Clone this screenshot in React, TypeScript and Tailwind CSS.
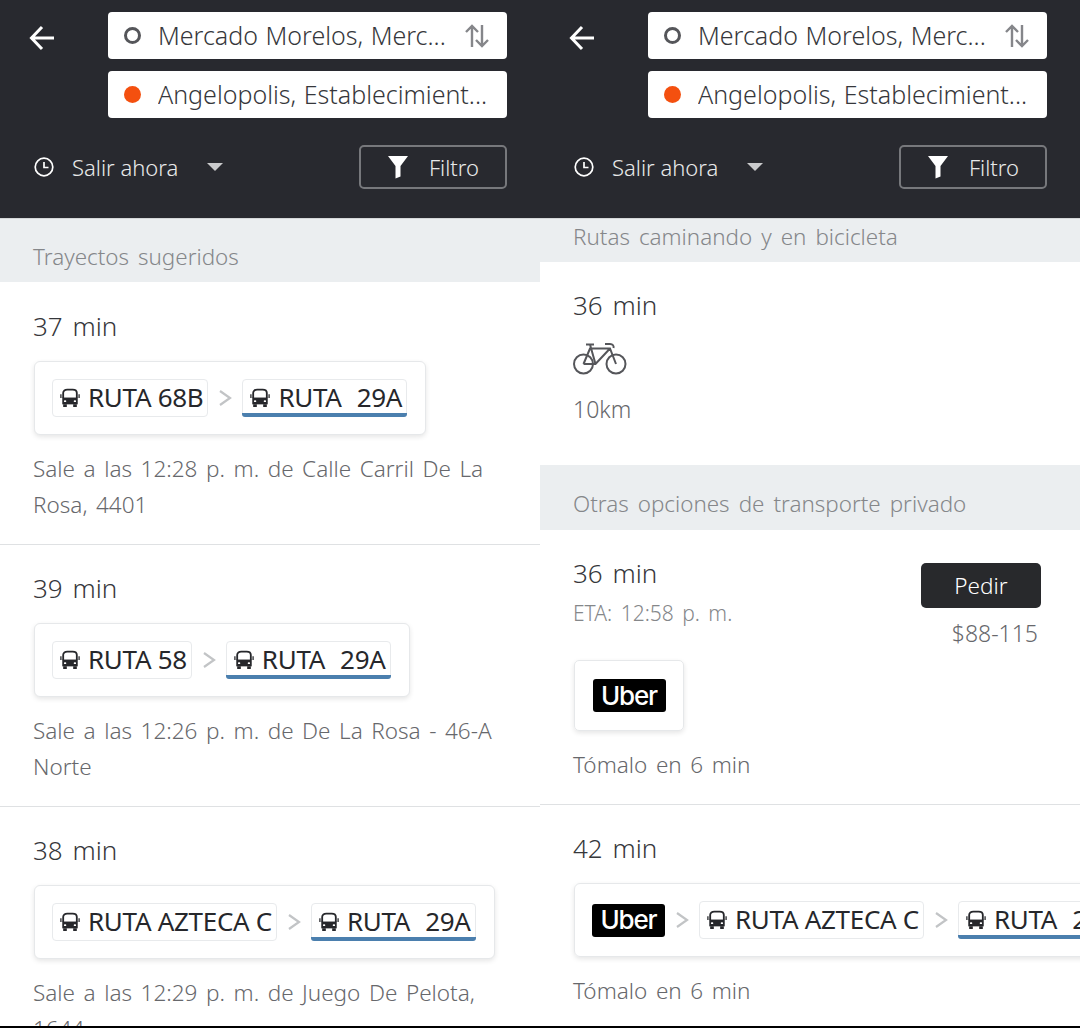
const BusIcon = () => (
  <svg width="20" height="20" viewBox="0 0 22 22" className="shrink-0" fill="none">
    <path d="M3.5 11V5.5C3.5 2.8 5.5 1.8 8 1.8h6c2.5 0 4.5 1 4.5 3.7V11" stroke="#26272b" strokeWidth="2" />
    <path d="M2.5 10.5h17V18h-17z" fill="#26272b" />
    <path d="M3.5 18h4v3h-4zM14.5 18h4v3h-4z" fill="#26272b" />
    <path d="M1 7v4M21 7v4" stroke="#26272b" strokeWidth="1.4" />
    <rect x="4.3" y="13.5" width="2.6" height="2" rx="1" fill="#fff" />
    <rect x="15.1" y="13.5" width="2.6" height="2" rx="1" fill="#fff" />
  </svg>
);

const Chevron = () => (
  <svg width="14" height="18" viewBox="0 0 14 18" fill="none" className="shrink-0">
    <path d="M2 2l10 7-10 7" stroke="#c2c4c6" strokeWidth="2.2" />
  </svg>
);

const Pill = ({ label, line, active }: { label: string; line?: string; active?: boolean }) => (
  <div className="relative flex h-[38px] shrink-0 items-center gap-[8px] rounded-[4px] border border-[#e8eaec] pl-[7px] pr-[4px] text-[26px] tracking-[-0.3px] text-[#26272b]">
    <BusIcon />
    <span className="pb-[2px] whitespace-pre">{label}</span>
    {line && <span className="ml-[7px] pb-[2px]">{line}</span>}
    {active && <div className="absolute -left-px -right-px -bottom-px h-1 rounded-b-[3px] bg-[#4b7fae]" />}
  </div>
);

const UberMark = () => (
  <div className="flex h-[33px] w-[73px] shrink-0 items-center justify-center rounded-[3px] bg-black font-['Inter',sans-serif] text-[26px] leading-none font-medium tracking-[-1.2px] text-white">
    Uber
  </div>
);

const RouteCard = ({ children }: { children: React.ReactNode }) => (
  <div className="ml-px flex h-[74px] w-fit items-center gap-[10px] rounded-[6px] border border-[#e6e8ea] bg-white pl-[17px] pr-[18px] shadow-[0_2px_5px_rgba(0,0,0,0.1)]">
    {children}
  </div>
);

const Field = ({ text, dot, swap }: { text: string; dot: "ring" | "fill"; swap?: boolean }) => (
  <div className="flex h-[47px] items-center rounded-[4px] bg-white pl-4 pr-[17px]">
    {dot === "ring" ? (
      <div className="size-[17px] shrink-0 rounded-full border-[3px] border-[#55565a]" />
    ) : (
      <div className="size-[17px] shrink-0 rounded-full bg-[#f4500f]" />
    )}
    <span className="ml-[17px] min-w-0 flex-1 truncate text-[25px] font-light text-[#36373b] [word-spacing:1px]">{text}</span>
    {swap && (
      <svg width="26" height="26" viewBox="0 0 26 26" fill="none" stroke="#85868a" strokeWidth="2.4" className="shrink-0">
        <path d="M8 24V3M2 9l6-6 6 6" />
        <path d="M18 2v21M12 17l6 6 6-6" />
      </svg>
    )}
  </div>
);

const Header = ({ from, to }: { from: string; to: string }) => (
  <header className="flex h-[218px] shrink-0 flex-col bg-[#28292f] pt-3 pl-[29px] pr-[33px]">
    <div className="flex">
      <svg width="26" height="26" viewBox="0 0 26 26" fill="none" stroke="#fff" strokeWidth="3" className="mt-[13px] shrink-0">
        <path d="M25 13H3M13 2L2.5 13 13 24" />
      </svg>
      <div className="ml-[53px] flex min-w-0 flex-1 flex-col gap-3">
        <Field text={from} dot="ring" swap />
        <Field text={to} dot="fill" />
      </div>
    </div>
    <div className="mt-[27px] flex items-center justify-between pl-[5px]">
      <div className="flex items-center text-[22px] font-light text-[#e8e9ea]">
        <svg width="20" height="20" viewBox="0 0 20 20" fill="none" stroke="#fff" strokeWidth="1.7" className="shrink-0">
          <circle cx="10" cy="10" r="8.8" />
          <path d="M10 5v5.5h4.5" />
        </svg>
        <span className="ml-[18px]">Salir ahora</span>
        <div className="ml-[29px] h-0 w-0 border-x-[8px] border-t-[8px] border-x-transparent border-t-[#c9cacc]" />
      </div>
      <div className="flex h-11 w-[148px] items-center justify-center rounded-[5px] border-2 border-[#77787c] text-[22px] font-light text-[#e8e9ea]">
        <svg width="22" height="24" viewBox="0 0 22 24" fill="#fff" className="shrink-0">
          <path d="M1 1h20l-7.5 10v10.5l-5 2V11z" />
        </svg>
        <span className="ml-5">Filtro</span>
      </div>
    </div>
  </header>
);

const SectionTitle = ({ children, className }: { children: string; className: string }) => (
  <div className={`flex shrink-0 items-center bg-[#ebeef0] px-[33px] text-[22.4px] font-light text-[#85878a] [word-spacing:3.2px] ${className}`}>
    {children}
  </div>
);

const TripRow = ({ time, children, desc }: { time: string; children: React.ReactNode; desc: string }) => (
  <div className="h-[262px] shrink-0 border-b border-[#dfe1e3] px-[33px] pt-[24px]">
    <div className="text-[26px] leading-[38px] font-light text-[#36373b] [word-spacing:3px]">{time}</div>
    <div className="mt-[16px]">
      <RouteCard>{children}</RouteCard>
    </div>
    <p className="mt-[16px] text-[22.5px] leading-[36px] font-light text-[#67686c] [word-spacing:2.7px]">{desc}</p>
  </div>
);

export default function App() {
  return (
    <div className="flex h-[1028px] w-[1080px] flex-col overflow-hidden bg-white font-['Noto_Sans',sans-serif]">
      <div className="flex h-[1026px]">
        {/* lista de trayectos */}
        <section className="flex w-[540px] flex-col overflow-hidden">
          <Header from="Mercado Morelos, Merc..." to="Angelopolis, Establecimient..." />
          <SectionTitle className="mb-px h-[64px] border-t border-[#d5d7d9] pt-3">Trayectos sugeridos</SectionTitle>
          <TripRow time="37 min" desc="Sale a las 12:28 p. m. de Calle Carril De La Rosa, 4401">
            <Pill label="RUTA 68B" />
            <Chevron />
            <Pill label="RUTA" line="29A" active />
          </TripRow>
          <TripRow time="39 min" desc="Sale a las 12:26 p. m. de De La Rosa - 46-A Norte">
            <Pill label="RUTA 58" />
            <Chevron />
            <Pill label="RUTA" line="29A" active />
          </TripRow>
          <TripRow time="38 min" desc="Sale a las 12:29 p. m. de Juego De Pelota, 1644">
            <Pill label="RUTA AZTECA C" />
            <Chevron />
            <Pill label="RUTA" line="29A" active />
          </TripRow>
        </section>

        {/* otras opciones */}
        <section className="flex w-[540px] flex-col overflow-hidden">
          <Header from="Mercado Morelos, Merc..." to="Angelopolis, Establecimient..." />
          <SectionTitle className="h-[44px] border-t border-[#d5d7d9] pb-[8px]">Rutas caminando y en bicicleta</SectionTitle>
          <div className="h-[203px] shrink-0 px-[33px] pt-[24px]">
            <div className="text-[26px] leading-[38px] font-light text-[#36373b] [word-spacing:3px]">36 min</div>
            <svg width="54" height="36" viewBox="0 0 54 36" fill="none" stroke="#55565a" strokeWidth="2" className="mt-[18px]">
              <circle cx="10.5" cy="22" r="9.5" />
              <circle cx="43" cy="22" r="9.5" />
              <path d="M10.5 22L17 6.5h20L43 22M37 6.5L22.5 22h-12M17 2.5L22.5 22M13 2.5h8M32 2h5c3 0 4 2 3.5 4" />
            </svg>
            <div className="mt-[14px] text-[23px] leading-[34px] font-light text-[#67686c]">10km</div>
          </div>
          <SectionTitle className="h-[65px] pt-3">Otras opciones de transporte privado</SectionTitle>

          <div className="h-[275px] shrink-0 border-b border-[#dfe1e3] pr-[39px] pl-[33px] pt-[24px]">
            <div className="flex justify-between">
              <div>
                <div className="text-[26px] leading-[38px] font-light text-[#36373b] [word-spacing:3px]">36 min</div>
                <div className="mt-[6px] text-[21px] leading-[30px] font-light text-[#85878a] [word-spacing:3px]">ETA: 12:58 p. m.</div>
              </div>
              <div className="mt-[9px] flex flex-col items-end">
                <div className="flex h-[45px] w-[120px] items-center justify-center rounded-[5px] bg-[#28292c] text-[22.5px] font-light text-white">
                  Pedir
                </div>
                <div className="mt-[8px] mr-[3px] text-[23px] leading-[34px] font-light text-[#67686c]">$88-115</div>
              </div>
            </div>
            <div className="mt-[10px] ml-px flex h-[71px] w-[110px] items-center justify-center rounded-[5px] border border-[#e6e8ea] shadow-[0_2px_5px_rgba(0,0,0,0.1)]">
              <UberMark />
            </div>
            <div className="mt-[17px] text-[22.5px] leading-[34px] font-light text-[#67686c] [word-spacing:2.7px]">Tómalo en 6 min</div>
          </div>

          <div className="px-[33px] pt-[24px]">
            <div className="text-[26px] leading-[38px] font-light text-[#36373b] [word-spacing:3px]">42 min</div>
            <div className="mt-[16px] ml-px flex h-[74px] w-[600px] items-center gap-[10px] rounded-[6px] border border-[#e6e8ea] pl-[17px] shadow-[0_2px_5px_rgba(0,0,0,0.1)]">
              <UberMark />
              <Chevron />
              <Pill label="RUTA AZTECA C" />
              <Chevron />
              <Pill label="RUTA" line="29A" active />
            </div>
            <div className="mt-[17px] text-[22.5px] leading-[34px] font-light text-[#67686c] [word-spacing:2.7px]">Tómalo en 6 min</div>
          </div>
        </section>
      </div>
      <div className="h-[2px] bg-black" />
    </div>
  );
}
